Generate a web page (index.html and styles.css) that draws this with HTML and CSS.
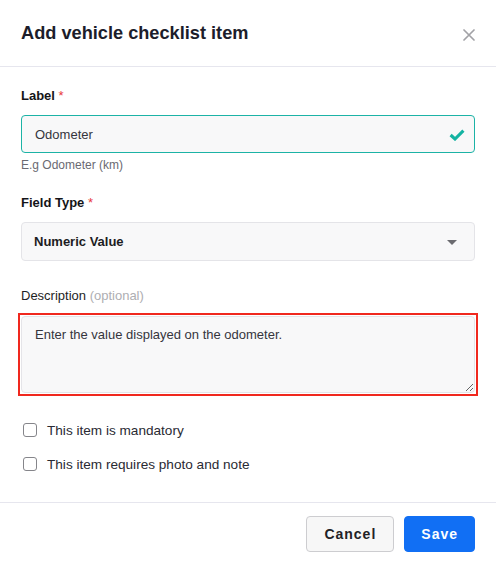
FILE: index.html
```html
<!DOCTYPE html>
<html lang="en">
<head>
<meta charset="UTF-8" />
<meta name="viewport" content="width=device-width, initial-scale=1" />
<title>Add vehicle checklist item</title>
<link rel="stylesheet" href="styles.css">
</head>
<body>

<div class="modal" role="dialog" aria-labelledby="modal-title">
  <header class="modal-header">
    <h1 id="modal-title">Add vehicle checklist item</h1>
    <button class="close-btn" type="button" aria-label="Close">
      <svg width="12" height="12" viewBox="0 0 12 12" aria-hidden="true">
        <path d="M1 1 L11 11 M11 1 L1 11" stroke="currentColor" stroke-width="1.7" stroke-linecap="round" fill="none"/>
      </svg>
    </button>
  </header>

  <form class="modal-body">
    <div class="field field-hinted">
      <label class="field-label" for="label-input">Label <span class="req">*</span></label>
      <div class="control-wrap">
        <input id="label-input" class="control control-valid" type="text" value="Odometer">
        <svg class="control-icon check-icon" width="16" height="12" viewBox="0 0 16 12" aria-hidden="true">
          <path d="M1.6 6 L6 10 L14.4 1.6" stroke="currentColor" stroke-width="3.1" fill="none"/>
        </svg>
      </div>
      <div class="hint">E.g Odometer (km)</div>
    </div>

    <div class="field">
      <label class="field-label" for="type-select">Field Type <span class="req">*</span></label>
      <div class="control-wrap">
        <select id="type-select" class="control control-select">
          <option>Numeric Value</option>
          <option>Yes / No</option>
          <option>Text</option>
        </select>
        <svg class="control-icon caret-icon" width="10" height="5" viewBox="0 0 10 5" aria-hidden="true">
          <path d="M0 0 H10 L5 5 Z" fill="currentColor"/>
        </svg>
      </div>
    </div>

    <div class="field field-ringed">
      <label class="field-label field-label-plain" for="desc-input">Description <span class="optional">(optional)</span></label>
      <div class="focus-ring">
        <textarea id="desc-input" class="control control-area">Enter the value displayed on the odometer.</textarea>
      </div>
    </div>

    <div class="checks">
      <label class="check-row"><input type="checkbox" class="check-box"> This item is mandatory</label>
      <label class="check-row"><input type="checkbox" class="check-box"> This item requires photo and note</label>
    </div>
  </form>

  <footer class="modal-footer">
    <button type="button" class="btn btn-secondary">Cancel</button>
    <button type="button" class="btn btn-primary">Save</button>
  </footer>
</div>

</body>
</html>
```

FILE: styles.css
```css
* {
  box-sizing: border-box;
}
body {
  margin: 0;
  padding: 0;
  font-family: 'Liberation Sans', Arial, Helvetica, sans-serif;
  background: #fff;
  color: #333;
}

.modal {
  width: 496px;
  min-height: 565px;
  background: #fff;
}

.modal-header {
  display: flex;
  justify-content: space-between;
  align-items: center;
  padding: 21px 21px;
  border-bottom: 1px solid #e6e6ee;
}
.modal-header h1 {
  margin: 0;
  font-size: 18.2px;
  line-height: 24px;
  font-weight: 700;
  color: #1c1d2b;
}
.close-btn {
  display: flex;
  margin: 3px 0 0;
  padding: 0;
  border: 0;
  background: none;
  color: #a2a2a6;
  cursor: pointer;
}

.modal-body {
  padding: 21px 21px 28px;
}

.field {
  margin-bottom: 27px;
}
.field-hinted {
  margin-bottom: 22px;
}
.field-ringed {
  margin-bottom: 24px;
}
.field-label {
  display: block;
  margin-bottom: 11px;
  font-size: 13px;
  line-height: 16px;
  font-weight: 700;
  color: #141418;
}
.field-label-plain {
  font-weight: 400;
  margin-bottom: 9px;
  color: #1e1e24;
}
.req {
  color: #e8383d;
  font-weight: 400;
}
.optional {
  color: #aeaeb2;
}

.control-wrap {
  position: relative;
}
.control {
  display: block;
  width: 100%;
  height: 38px;
  padding: 0 12px;
  font-family: inherit;
  font-size: 13px;
  color: #35353d;
  background: #f8f8f9;
  border: 1px solid #e4e4e8;
  border-radius: 4px;
  outline: none;
}
.control-valid {
  padding-left: 13px;
  border-color: #1cb3a6;
}
.control-select {
  -webkit-appearance: none;
  appearance: none;
  height: 39px;
  font-weight: 700;
  color: #1c1c22;
}

/* red ring around the active textarea */
.focus-ring {
  margin: 0 -3px;
  padding: 1px;
  border: 2px solid #f0281e;
}
.control-area {
  height: 77px;
  padding: 9px 13px;
  line-height: 18px;
  resize: vertical;
}

.control-icon {
  position: absolute;
  top: 50%;
  pointer-events: none;
}
.check-icon {
  right: 10px;
  margin-top: -5px;
  color: #14b3a2;
}
.caret-icon {
  right: 18px;
  margin-top: -2px;
  color: #6b6b70;
}

.hint {
  margin-top: 4px;
  font-size: 12px;
  line-height: 16px;
  color: #6a6a72;
}

.checks {
  display: flex;
  flex-direction: column;
  gap: 14px;
}
.check-row {
  display: flex;
  align-items: center;
  gap: 10px;
  height: 20px;
  font-size: 13.6px;
  color: #2a2a33;
  cursor: pointer;
}
.check-box {
  -webkit-appearance: none;
  appearance: none;
  width: 14px;
  height: 14px;
  margin: 0 0 0 2px;
  border: 1.5px solid #85858a;
  border-radius: 3px;
  background: #fff;
}

.modal-footer {
  display: flex;
  justify-content: flex-end;
  gap: 10px;
  padding: 13px 21px;
  border-top: 1px solid #e6e6ee;
}
.btn {
  height: 36px;
  font-family: inherit;
  font-size: 14px;
  font-weight: 700;
  letter-spacing: 1px;
  border-radius: 4px;
  cursor: pointer;
}
.btn-secondary {
  padding: 0 17px;
  background: #f7f7f7;
  border: 1px solid #cdcdd0;
  color: #222226;
}
.btn-primary {
  padding: 0 16px;
  background: #116ff4;
  border: 1px solid #116ff4;
  color: #fff;
}
```
